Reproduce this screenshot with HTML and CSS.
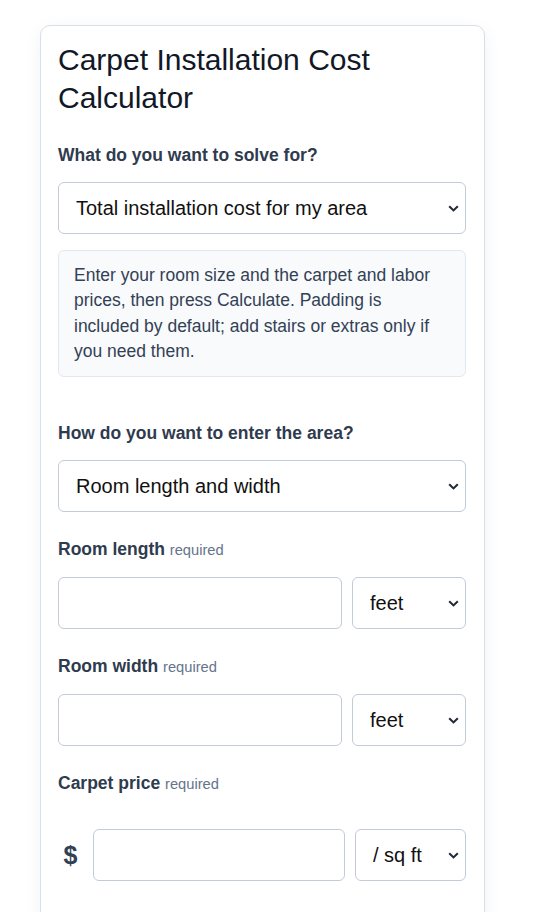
FILE: index.html
```html
<!DOCTYPE html>
<html lang="en">
<head>
<meta charset="utf-8">
<title>Carpet Installation Cost Calculator</title>
<link rel="stylesheet" href="styles.css">
</head>
<body>
<main class="page">
  <section class="card">
    <h1 class="title">Carpet Installation Cost Calculator</h1>

    <div class="field field-intro">
      <label class="label" for="solve">What do you want to solve for?</label>
      <select id="solve" class="control select">
        <option>Total installation cost for my area</option>
      </select>
      <p class="info">Enter your room size and the carpet and labor prices, then press Calculate. Padding is included by default; add stairs or extras only if you need them.</p>
    </div>

    <div class="field">
      <label class="label" for="method">How do you want to enter the area?</label>
      <select id="method" class="control select">
        <option>Room length and width</option>
      </select>
    </div>

    <div class="field">
      <label class="label" for="len">Room length <span class="req">required</span></label>
      <div class="row">
        <input id="len" class="control input" type="text">
        <select class="control select">
          <option>feet</option>
        </select>
      </div>
    </div>

    <div class="field">
      <label class="label" for="wid">Room width <span class="req">required</span></label>
      <div class="row">
        <input id="wid" class="control input" type="text">
        <select class="control select">
          <option>feet</option>
        </select>
      </div>
    </div>

    <div class="field">
      <label class="label" for="price">Carpet price <span class="req">required</span></label>
      <div class="row row-price">
        <span class="currency">$</span>
        <input id="price" class="control input" type="text">
        <select class="control select">
          <option>/ sq ft</option>
        </select>
      </div>
    </div>
  </section>
</main>
</body>
</html>
```

FILE: styles.css
```css
html, body {
  height: 912px;
  overflow: hidden;
}

body {
  margin: 0;
  background: #ffffff;
  font-family: "Liberation Sans", Arial, sans-serif;
  color: #334155;
}

.page {
  padding: 25px 0 0 40px;
}

.card {
  box-sizing: border-box;
  width: 445px;
  border: 1px solid #d7dfe9;
  border-radius: 10px;
  padding: 15px 18px 60px 17px;
  background: #ffffff;
  box-shadow: 0 4px 18px rgba(15, 23, 42, 0.05);
}

.title {
  margin: 0 0 27px;
  font-size: 30px;
  font-weight: 400;
  line-height: 37.5px;
  color: #111827;
}

.field {
  margin-bottom: 25px;
}

.field-intro {
  margin-bottom: 44px;
}

.label {
  display: block;
  margin-bottom: 15px;
  font-size: 17.5px;
  font-weight: 700;
  line-height: 24px;
  color: #2f3b4e;
}

.req {
  font-size: 14.7px;
  font-weight: 400;
  color: #64748b;
}

.control {
  box-sizing: border-box;
  display: block;
  width: 100%;
  height: 52px;
  margin: 0;
  border: 1px solid #c2cbd7;
  border-radius: 6px;
  background-color: #ffffff;
  font-family: "Liberation Sans", Arial, sans-serif;
  font-size: 20px;
  color: #111111;
}

.input {
  padding: 0 16px;
}

.select {
  -webkit-appearance: none;
  appearance: none;
  padding: 0 30px 0 17px;
  background-image: url("data:image/svg+xml,%3Csvg xmlns='http://www.w3.org/2000/svg' width='11' height='7' viewBox='0 0 11 7'%3E%3Cpath d='M1.2 1.3 L5.5 5.4 L9.8 1.3' fill='none' stroke='%231f2937' stroke-width='2.1'/%3E%3C/svg%3E");
  background-repeat: no-repeat;
  background-position: right 6px center;
  background-size: 11px 7px;
}

.info {
  margin: 16px 0 0;
  padding: 12px 25px 12px 15px;
  border: 1px solid #e2e8f0;
  border-radius: 6px;
  background: #f8fafc;
  font-size: 17.5px;
  line-height: 25.3px;
  color: #334155;
}

.row {
  display: grid;
  grid-template-columns: 1fr 114px;
  gap: 10px;
  align-items: center;
}

.row-price {
  grid-template-columns: 25px 1fr 111px;
  margin-top: 33px;
}

.currency {
  text-align: center;
  font-size: 25px;
  font-weight: 700;
  color: #334155;
}
```
